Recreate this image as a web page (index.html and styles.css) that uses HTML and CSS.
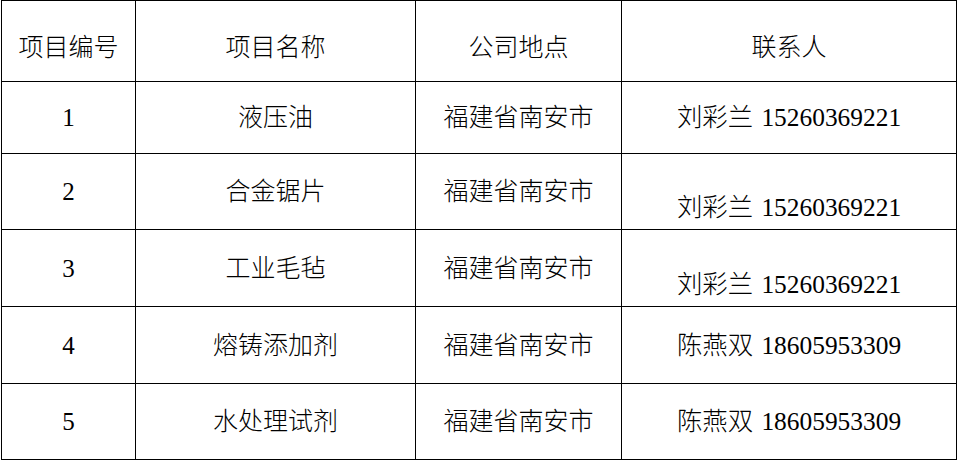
FILE: index.html
```html
<!DOCTYPE html>
<html lang="zh-CN">
<head>
<meta charset="utf-8">
<title>项目列表</title>
<link rel="stylesheet" href="styles.css">
</head>
<body>
<div class="grid">
  <div class="cell head">项目编号</div>
  <div class="cell head">项目名称</div>
  <div class="cell head">公司地点</div>
  <div class="cell head">联系人</div>

  <div class="cell r1">1</div>
  <div class="cell r1">液压油</div>
  <div class="cell r1">福建省南安市</div>
  <div class="cell r1 contact">刘彩兰 15260369221</div>

  <div class="cell r2">2</div>
  <div class="cell r2">合金锯片</div>
  <div class="cell r2">福建省南安市</div>
  <div class="cell r2 contact low">刘彩兰 15260369221</div>

  <div class="cell r3">3</div>
  <div class="cell r3">工业毛毡</div>
  <div class="cell r3">福建省南安市</div>
  <div class="cell r3 contact low">刘彩兰 15260369221</div>

  <div class="cell r4">4</div>
  <div class="cell r4">熔铸添加剂</div>
  <div class="cell r4">福建省南安市</div>
  <div class="cell r4 contact">陈燕双 18605953309</div>

  <div class="cell r5">5</div>
  <div class="cell r5">水处理试剂</div>
  <div class="cell r5">福建省南安市</div>
  <div class="cell r5 contact">陈燕双 18605953309</div>
</div>
</body>
</html>
```
FILE: styles.css
```css
html, body {
  margin: 0;
  padding: 0;
  background: #fff;
}

.grid {
  margin-left: 1px;
  width: 956px;
  box-sizing: border-box;
  display: grid;
  grid-template-columns: 134px 280px 206px 335px;
  grid-template-rows: 81px 72px 76px 77px 77px 76px;
  border-top: 1px solid #000;
  border-left: 1px solid #000;
  font-family: "Liberation Serif", "Noto Sans CJK SC", serif;
  font-size: 25px;
  font-weight: 300;
  color: #000;
}

.cell {
  box-sizing: border-box;
  border-right: 1px solid #000;
  border-bottom: 1px solid #000;
  display: flex;
  align-items: center;
  justify-content: center;
  line-height: 25px;
  white-space: nowrap;
}

.contact {
  font-size: 25.4px;
  word-spacing: 2px;
}

.head {
  padding-top: 12px;
}

.low {
  align-items: flex-end;
  padding-bottom: 9px;
}
```
